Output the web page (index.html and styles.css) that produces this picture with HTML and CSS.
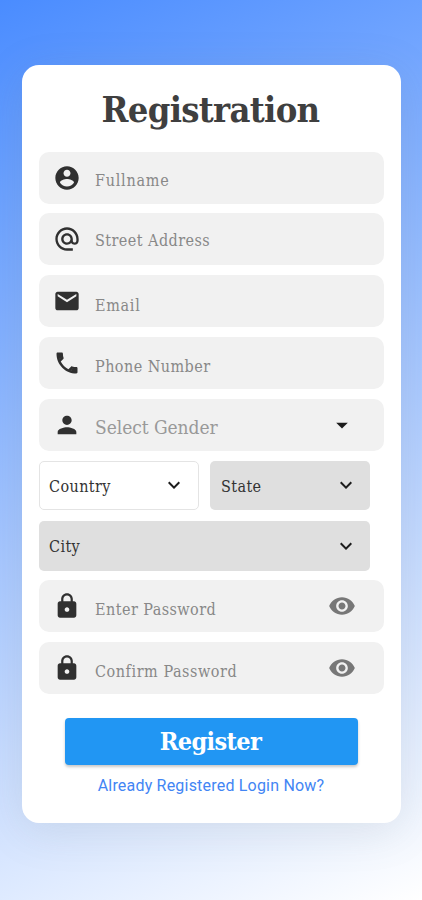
FILE: index.html
```
<!DOCTYPE html>
<html lang="en">
<head>
<meta charset="utf-8">
<title>Registration</title>
<link rel="stylesheet" href="styles.css">
</head>
<body>
<svg width="0" height="0" class="sprite">
  <symbol id="account" viewBox="0 0 24 24"><path d="M12 2C6.480 2 2 6.480 2 12s4.480 10 10 10 10-4.480 10-10S17.520 2 12 2zm0 3c1.660 0 3 1.340 3 3s-1.340 3-3 3-3-1.340-3-3 1.340-3 3-3zm0 14.200c-2.500 0-4.710-1.280-6-3.220.03-1.990 4-3.080 6-3.080 1.990 0 5.970 1.090 6 3.080-1.290 1.940-3.500 3.220-6 3.220z"/></symbol>
  <symbol id="at" viewBox="0 0 24 24"><path d="M12 2C6.480 2 2 6.480 2 12s4.480 10 10 10h5v-2h-5c-4.340 0-8-3.660-8-8s3.660-8 8-8 8 3.660 8 8v1.430c0 .79-.71 1.570-1.500 1.570s-1.500-.78-1.500-1.570V12c0-2.760-2.240-5-5-5s-5 2.240-5 5 2.240 5 5 5c1.380 0 2.640-.56 3.540-1.470.65.89 1.770 1.470 2.960 1.470 1.970 0 3.500-1.600 3.500-3.570V12c0-5.520-4.480-10-10-10zm0 13c-1.660 0-3-1.340-3-3s1.340-3 3-3 3 1.340 3 3-1.340 3-3 3z"/></symbol>
  <symbol id="mail" viewBox="0 0 24 24"><path d="M20 4H4c-1.100 0-1.990.9-1.990 2L2 18c0 1.100.9 2 2 2h16c1.100 0 2-.9 2-2V6c0-1.100-.9-2-2-2zm0 4l-8 5-8-5V6l8 5 8-5v2z"/></symbol>
  <symbol id="phone" viewBox="0 0 24 24"><path d="M6.540 5c.06.89.21 1.760.45 2.590l-1.200 1.200c-.41-1.200-.67-2.470-.76-3.790h1.510m9.860 12.020c.85.24 1.720.39 2.600.45v1.490c-1.320-.09-2.590-.35-3.800-.75l1.200-1.190M7.500 3H4c-.55 0-1 .45-1 1 0 9.390 7.610 17 17 17 .55 0 1-.45 1-1v-3.490c0-.55-.45-1-1-1-1.240 0-2.450-.2-3.570-.57-.35-.12-.74-.03-1.020.24l-2.200 2.200c-2.830-1.450-5.150-3.760-6.590-6.590l2.200-2.200c.28-.28.36-.67.25-1.020C8.700 6.450 8.500 5.250 8.500 4c0-.55-.45-1-1-1z"/><path d="M4 4h3.500v4L5.500 9zM20 20v-3.500h-4L15 18.500z"/></symbol>
  <symbol id="person" viewBox="0 0 24 24"><path d="M12 12c2.210 0 4-1.790 4-4s-1.790-4-4-4-4 1.790-4 4 1.790 4 4 4zm0 2c-2.670 0-8 1.340-8 4v2h16v-2c0-2.660-5.330-4-8-4z"/></symbol>
  <symbol id="lock" viewBox="0 0 24 24"><path d="M18 8h-1V6c0-2.760-2.240-5-5-5S7 3.240 7 6v2H6c-1.100 0-2 .9-2 2v10c0 1.100.9 2 2 2h12c1.100 0 2-.9 2-2V10c0-1.100-.9-2-2-2zm-6 9c-1.100 0-2-.9-2-2s.9-2 2-2 2 .9 2 2-.9 2-2 2zm3.100-9H8.900V6c0-1.710 1.390-3.100 3.100-3.100s3.100 1.390 3.100 3.100v2z"/></symbol>
  <symbol id="eye" viewBox="0 0 24 24"><path d="M12 4.500C7 4.500 2.730 7.610 1 12c1.730 4.390 6 7.500 11 7.500s9.270-3.110 11-7.500c-1.730-4.390-6-7.500-11-7.500zM12 17c-2.760 0-5-2.240-5-5s2.240-5 5-5 5 2.240 5 5-2.240 5-5 5zm0-8c-1.660 0-3 1.340-3 3s1.340 3 3 3 3-1.340 3-3-1.340-3-3-3z"/></symbol>
  <symbol id="caret" viewBox="0 0 24 24"><path d="M7 10l5 5 5-5z"/></symbol>
  <symbol id="chevron" viewBox="0 0 24 24"><path d="M7.410 8.590L12 13.170l4.590-4.580L18 10l-6 6-6-6z"/></symbol>
</svg>
<main class="card">
  <h1 class="title"><span>Registration</span></h1>
  <form class="form">
    <div class="field"><svg class="icon"><use href="#account"/></svg><span class="label fullname">Fullname</span></div>
    <div class="field"><svg class="icon"><use href="#at"/></svg><span class="label street">Street Address</span></div>
    <div class="field"><svg class="icon"><use href="#mail"/></svg><span class="label email">Email</span></div>
    <div class="field"><svg class="icon"><use href="#phone"/></svg><span class="label phone">Phone Number</span></div>
    <div class="field"><svg class="icon"><use href="#person"/></svg><span class="label gender">Select Gender</span><svg class="trail caret"><use href="#caret"/></svg></div>
    <div class="selects">
      <div class="select open"><span class="pick">Country</span><svg class="chevron"><use href="#chevron"/></svg></div>
      <div class="select state"><span class="pick">State</span><svg class="chevron"><use href="#chevron"/></svg></div>
      <div class="select wide"><span class="pick">City</span><svg class="chevron"><use href="#chevron"/></svg></div>
    </div>
    <div class="field"><svg class="icon"><use href="#lock"/></svg><span class="label enter">Enter Password</span><svg class="trail"><use href="#eye"/></svg></div>
    <div class="field"><svg class="icon"><use href="#lock"/></svg><span class="label confirm">Confirm Password</span><svg class="trail"><use href="#eye"/></svg></div>
  </form>
  <button class="register"><span>Register</span></button>
  <a class="login">Already Registered Login Now?</a>
</main>
</body>
</html>
```
FILE: styles.css
```
* { box-sizing: border-box; }
body {
  margin: 0;
  height: 900px;
  padding: 65px 21px 0 22px;
  overflow: hidden;
  background: linear-gradient(155deg, #4a8cff 0%, #ffffff 100%);
  font-family: "Roboto Slab", "DejaVu Serif Condensed", "DejaVu Serif", serif;
}
.sprite { position: absolute; }
.card {
  height: 758px;
  padding: 18.500px 17px 0;
  border-radius: 17px;
  background: #fff;
  box-shadow: 0 8px 44px rgba(120, 130, 130, .16);
  display: flex;
  flex-direction: column;
}
.title {
  margin: 0 0 18.100px;
  padding-right: 2px;
  height: 50px;
  line-height: 50px;
  display: flex;
  justify-content: center;
  color: #3f3f3f;
  font-size: 36px;
  letter-spacing: -.68px;
  white-space: nowrap;
}
.form { display: flex; flex-direction: column; gap: 9.800px; }
.field {
  height: 52px;
  padding: 0 28px 0 14px;
  display: flex;
  align-items: center;
  border-radius: 10px;
  background: #f1f1f1;
}
.icon { width: 28px; height: 28px; margin-right: 14px; fill: #303030; flex: none; }
.label {
  flex: 1;
  padding-top: 7px;
  font-size: 16px;
  line-height: 24px;
  color: #888;
  letter-spacing: .45px;
  white-space: nowrap;
}
.fullname { letter-spacing: .75px; }
.street { padding-top: 4px; }
.email { padding-top: 9px; letter-spacing: .7px; }
.phone { padding-top: 8px; }
.enter, .confirm { padding-top: 8px; }
.confirm { letter-spacing: .55px; }
.gender { font-size: 19px; color: #999; padding-top: 4px; letter-spacing: -.05px; }
.trail { width: 28px; height: 28px; fill: #777; flex: none; }
.caret { fill: #1c1c1c; }
.selects {
  display: grid;
  width: 331px;
  grid-template-columns: 160px 160px;
  gap: 11px;
}
.select {
  height: 49.500px;
  padding: 0 12px 0 10px;
  display: flex;
  align-items: center;
  justify-content: space-between;
  border-radius: 5px;
  background: #dfdfdf;
}
.open { background: #fff; border: 1px solid #e4e4e4; padding-left: 9px; padding-right: 12px; }
.state { padding-left: 11px; }
.wide { grid-column: span 2; }
.pick { padding-top: 2px; font-size: 16px; letter-spacing: .4px; color: #333; white-space: nowrap; }
.chevron { width: 24px; height: 24px; fill: #1c1c1c; }
.register {
  width: 293px;
  height: 47px;
  margin: 24.300px 0 0 26px;
  padding: 0 2px 0 0;
  border: 0;
  border-radius: 4px;
  background: #2196f3;
  box-shadow: 0 2px 3px rgba(0, 0, 0, .22);
  color: #fff;
  font: bold 25px "Roboto Slab", "DejaVu Serif Condensed", "DejaVu Serif", serif;
  letter-spacing: -.6px;
}
.login {
  align-self: center;
  margin-top: 11px;
  padding-right: 1px;
  font: 16px/20px Roboto, sans-serif;
  letter-spacing: .2px;
  color: #4285f4;
}
```
